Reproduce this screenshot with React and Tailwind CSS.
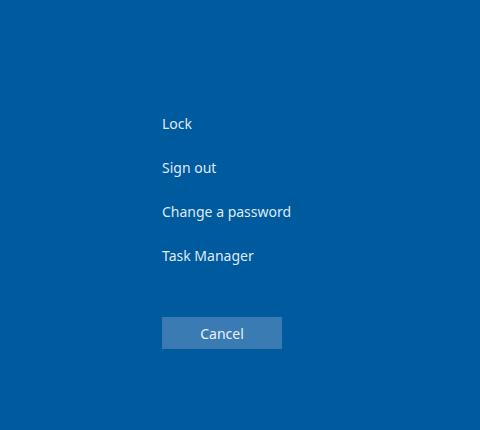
export default function App() {
    const items = ['Lock', 'Sign out', 'Change a password', 'Task Manager'];

    return (
        <div className="w-[480px] h-[430px] bg-[#005a9e] text-[#dfe9f4] overflow-hidden" style={{ fontFamily: '"Segoe UI", "Noto Sans", "Open Sans", sans-serif' }}>
            <div className="pl-[162px] pt-[102px] flex flex-col items-start">
                {/* Options */}
                {items.map(item => (
                    <button key={item} className="h-[44px] leading-[44px] text-[14px] text-left">
                        {item}
                    </button>
                ))}

                <button className="mt-[39px] w-[120px] h-[32px] bg-[#3b7bb3] text-[14px] text-[#e8f0f8]">
                    Cancel
                </button>
            </div>
        </div>
    );
}
